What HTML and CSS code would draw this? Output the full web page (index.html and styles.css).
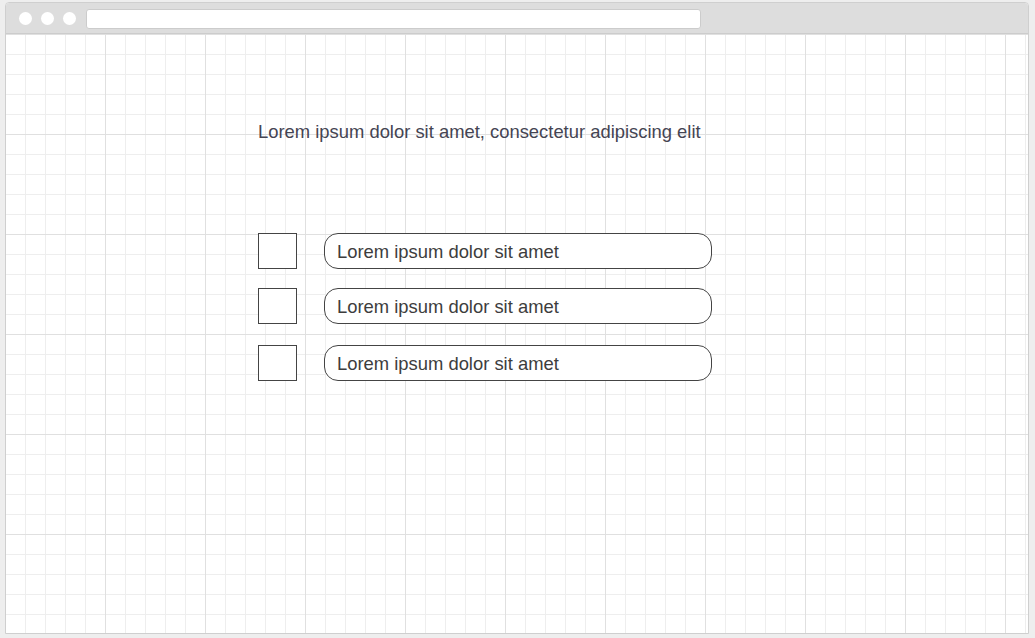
FILE: index.html
```html
<!DOCTYPE html>
<html>
<head>
<meta charset="utf-8">
<link rel="stylesheet" href="styles.css">
</head>
<body>
<div class="window">
  <div class="titlebar">
    <div class="dots">
      <span class="dot"></span><span class="dot"></span><span class="dot"></span>
    </div>
    <div class="address"></div>
  </div>
  <div class="canvas">
    <div class="content">
      <p class="heading">Lorem ipsum dolor sit amet, consectetur adipiscing elit</p>
      <div class="list">
        <div class="row"><span class="check"></span><span class="pill">Lorem ipsum dolor sit amet</span></div>
        <div class="row"><span class="check"></span><span class="pill">Lorem ipsum dolor sit amet</span></div>
        <div class="row row-last"><span class="check"></span><span class="pill">Lorem ipsum dolor sit amet</span></div>
      </div>
    </div>
  </div>
</div>
</body>
</html>
```

FILE: styles.css
```css
html, body {
  margin: 0;
  padding: 0;
}
body {
  background: #eeeeee;
  padding: 2px 0 0 5px;
  font-family: "Liberation Sans", Arial, sans-serif;
  color: #333333;
}
.window {
  width: 1022px;
  height: 630px;
  border: 1px solid #cfcfcf;
  border-radius: 4px 4px 0 0;
  background: #ffffff;
  display: flex;
  flex-direction: column;
  overflow: hidden;
}
.titlebar {
  height: 30px;
  background: #dddddd;
  border-bottom: 1px solid #cccccc;
  display: flex;
  align-items: center;
  padding-left: 13px;
  flex: none;
}
.dots {
  display: flex;
  gap: 9px;
}
.dot {
  width: 13px;
  height: 13px;
  border-radius: 50%;
  background: #ffffff;
}
.address {
  margin-left: 10px;
  width: 613px;
  height: 18px;
  background: #ffffff;
  border: 1px solid #cccccc;
  border-radius: 3px;
  margin-top: 1px;
}
.canvas {
  flex: 1;
  background-color: #ffffff;
  background-image:
    linear-gradient(to right, #e0e0e0 1px, transparent 1px),
    linear-gradient(to bottom, #e0e0e0 1px, transparent 1px),
    linear-gradient(to right, #eeeeee 1px, transparent 1px),
    linear-gradient(to bottom, #eeeeee 1px, transparent 1px);
  background-size: 100px 100px, 100px 100px, 20px 20px, 20px 20px;
  background-position: -1px 0, -1px 0, -1px 0, -1px 0;
}
.content {
  padding: 88px 0 0 252px;
}
.heading {
  margin: 0;
  font-size: 18.4px;
  line-height: 20px;
  color: #444452;
}
.list {
  margin-top: 91px;
  display: flex;
  flex-direction: column;
  gap: 19px;
}
.row {
  display: flex;
  align-items: center;
  gap: 27px;
}
.row-last {
  margin-top: 2px;
}
.check {
  width: 37px;
  height: 34px;
  border: 1px solid #444444;
  background: #ffffff;
  box-sizing: content-box;
}
.pill {
  width: 374px;
  height: 33px;
  padding-top: 1px;
  border: 1px solid #444444;
  border-radius: 14px;
  background: #ffffff;
  display: flex;
  align-items: center;
  padding-left: 12px;
  font-size: 18.4px;
  color: #3d3d3d;
}
```
